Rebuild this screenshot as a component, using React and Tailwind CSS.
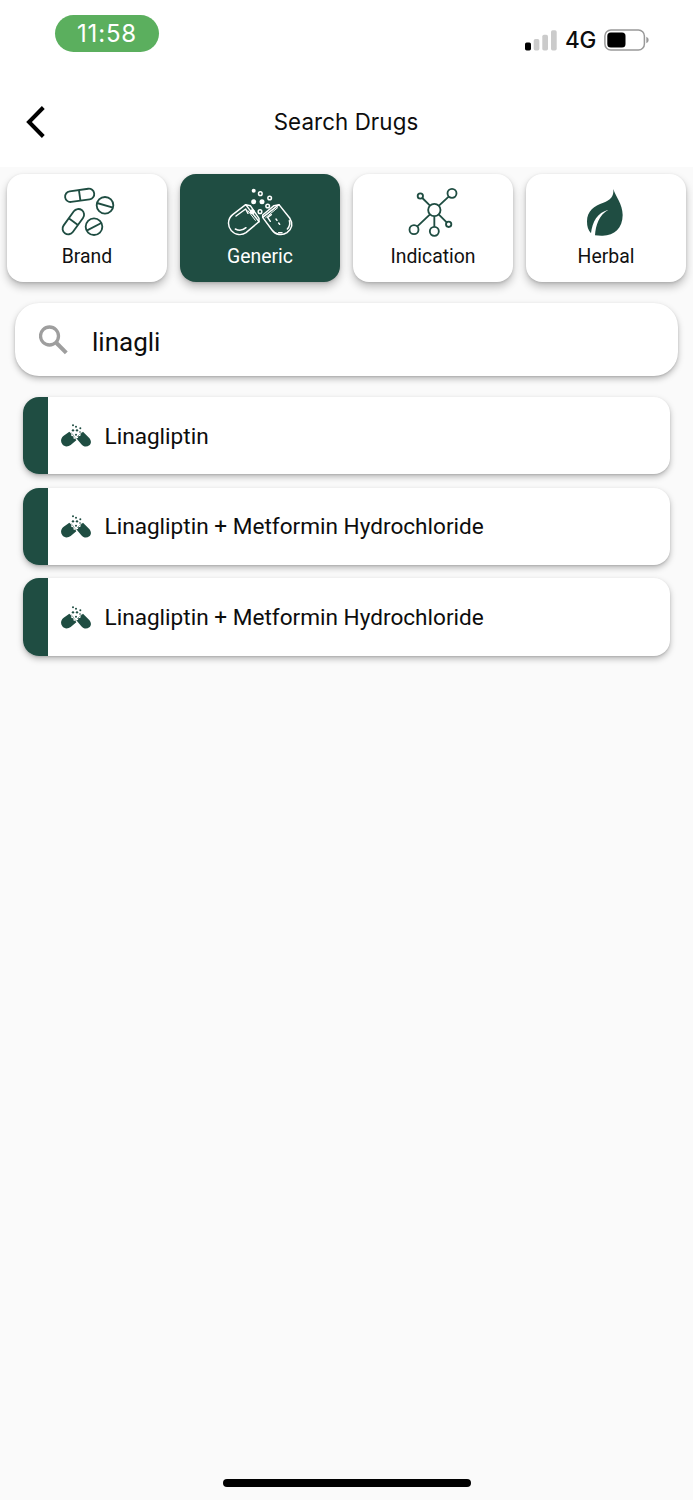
const TABS = [
  { label: "Brand", Icon: PillsIcon },
  { label: "Generic", Icon: OpenCapsuleIcon, active: true },
  { label: "Indication", Icon: MoleculeIcon },
  { label: "Herbal", Icon: LeafIcon },
];

const RESULTS = [
  "Linagliptin",
  "Linagliptin + Metformin Hydrochloride",
  "Linagliptin + Metformin Hydrochloride",
];

function PillsIcon() {
  return (
    <svg viewBox="1 1 192 156" className="w-16 h-[52px] overflow-visible" fill="none" stroke="#1f4d42" strokeWidth="5.5">
      <g transform="translate(75 29) rotate(-8)">
        <rect x="-44" y="-16" width="88" height="32" rx="16" />
        <path d="M0 -16V16" />
      </g>
      <g transform="translate(56 108) rotate(-54)">
        <rect x="-43" y="-17" width="86" height="34" rx="17" />
        <path d="M0 -17V17" />
      </g>
      <circle cx="151" cy="59" r="25" />
      <path d="M127 52L175 66" />
      <circle cx="118" cy="123" r="25" />
      <path d="M96 135L140 112" />
    </svg>
  );
}

function OpenCapsuleIcon() {
  return (
    <svg viewBox="0 1 192 156" className="w-16 h-[52px] overflow-visible" fill="none" stroke="#fff" strokeWidth="4.4" strokeLinecap="round" strokeLinejoin="round">
      {/* left half */}
      <path d="M53 57L14 87C-3 101 -1 123 10 135C21 149 42 150 54 141L93 108Z" />
      <path d="M53 57L67 60L93 98V108" />
      <path d="M24 91L53 70L60 83" />
      <path d="M60 75L82 104" strokeWidth="3" />
      <path d="M22 130C33 136 45 134 54 126" />
      {/* right half */}
      <path d="M153 57L104 95L132 133C142 148 163 151 177 141C193 129 195 113 185 97Z" />
      <path d="M153 57L138 60L104 88V95" />
      <path d="M149 66L113 96" strokeWidth="3" />
      <path d="M130 87L119 95L127 107" />
      <path d="M144 100L147 104M152 112L155 116" />
      <path d="M184 105C187 116 183 125 178 130M152 141H162" />
      {/* granules */}
      <g fill="#fff" stroke="none">
        <circle cx="77" cy="15" r="6" />
        <circle cx="77" cy="48" r="7.5" />
        <circle cx="102" cy="48" r="7.5" />
        <circle cx="73" cy="78" r="7.5" />
      </g>
      <circle cx="97" cy="24" r="5.5" />
      <circle cx="125" cy="37" r="5.5" />
      <circle cx="119" cy="61" r="5.5" />
      <circle cx="96" cy="78" r="5.5" />
    </svg>
  );
}

function MoleculeIcon() {
  return (
    <svg viewBox="0 1 192 156" className="w-16 h-[52px] overflow-visible" fill="none" stroke="#1f4d42" strokeWidth="5.5">
      <circle cx="100" cy="73" r="18.5" />
      <circle cx="153" cy="23" r="13.5" />
      <circle cx="58" cy="31" r="8" />
      <circle cx="39" cy="132" r="13.5" />
      <circle cx="100" cy="137" r="13.5" />
      <circle cx="143" cy="116" r="8" />
      <path d="M114 60L143 33M64 37L87 60M49 122L87 86M100 92V123M113 86L137 110" />
    </svg>
  );
}

function LeafIcon() {
  return (
    <svg viewBox="0 1 192 156" className="w-16 h-[52px] overflow-visible" fill="#1f4d42">
      <path d="M118 10C124 31 146 55 146 88C146 128 119 152 82 150C75 150 69 150 63 149C65 118 75 88 103 72C70 81 55 108 51 143C42 134 39 123 39 107C39 76 61 60 88 51C109 44 120 33 118 10Z" />
    </svg>
  );
}

function CapsuleIcon() {
  return (
    <svg viewBox="0 0 90 69" className="w-[30px] h-[23px] shrink-0" fill="#1f4d42">
      <path d="M25 23L7 36C-1 43 -2 53 4 61C10 69 21 69 29 63L46 49L43 44L38 44L37 37L31 36L31 29Z" />
      <path d="M66 23L84 41C92 50 91 58 85 64C77 70 68 69 61 61L46 43L51 42L52 36L58 36L59 29Z" />
      <path d="M31 26L45 44M61 26L48 39" stroke="#1f4d42" strokeWidth="2" strokeDasharray="3 2" />
      <circle cx="36" cy="4" r="3" />
      <circle cx="45" cy="8" r="3" />
      <circle cx="58" cy="13" r="3" />
      <circle cx="36" cy="19" r="3.5" />
      <circle cx="48" cy="19" r="3.5" />
      <circle cx="57" cy="24" r="2.5" />
      <circle cx="45" cy="32" r="3" />
    </svg>
  );
}

function StatusBar() {
  return (
    <div className="flex justify-between items-start h-[76px] pl-[55px] pr-11 pt-[15px]">
      <div className="w-[104px] h-[37px] rounded-full bg-[#5baf5e] text-white text-[24px] leading-[38px] text-center tracking-[0.8px] font-['Inter',sans-serif]">
        11:58
      </div>
      <div className="flex items-center pt-[11px]">
        <svg viewBox="0 0 32 21" className="w-8 h-[21px]" fill="#cbcbcb">
          <rect x="0" y="12.5" width="6" height="8" rx="1.7" fill="#000" />
          <rect x="8.7" y="9" width="5.7" height="11.5" rx="1.7" />
          <rect x="17.3" y="4.7" width="5.7" height="15.8" rx="1.7" />
          <rect x="26" y="0.3" width="5.7" height="20.2" rx="1.7" />
        </svg>
        <span className="ml-2 w-[31px] text-[22.5px] leading-7 font-medium tracking-[-0.3px] whitespace-nowrap font-['Inter',sans-serif]">4G</span>
        <svg viewBox="0 0 45 22" className="w-[45px] h-[22px] ml-2">
          <rect x="0.9" y="1" width="39.5" height="20" rx="6" fill="none" stroke="#999" strokeWidth="1.5" />
          <rect x="3.3" y="3.5" width="18.2" height="15" rx="3.5" />
          <path d="M42.3 7.7Q44.7 8.8 44.7 11T42.3 14.3Z" fill="#999" />
        </svg>
      </div>
    </div>
  );
}

function TabCard({ label, Icon, active }) {
  return (
    <button
      className={`flex flex-col items-center h-[108px] pt-3 rounded-2xl shadow-[0_5px_9px_rgba(0,0,0,0.24),0_1px_3px_rgba(0,0,0,0.14)] ${
        active ? "bg-[#1f4d42] text-white" : "bg-white text-[#111]"
      }`}
    >
      <Icon />
      <span className="mt-[7px] text-[19.4px] leading-6">{label}</span>
    </button>
  );
}

function ResultRow({ name }) {
  return (
    <li className="flex items-center h-[77.5px] rounded-2xl bg-white shadow-[0_3px_6px_rgba(0,0,0,0.26),0_1px_2px_rgba(0,0,0,0.12)]">
      <div className="w-[25px] h-full rounded-l-2xl bg-[#1f4d42] mr-[12.5px]" />
      <CapsuleIcon />
      <span className="ml-3.5 mt-[2px] text-[22.6px] leading-7">{name}</span>
    </li>
  );
}

export default function App() {
  return (
    <div className="w-[693px] h-[1500px] flex flex-col overflow-hidden bg-[#fafafa] text-[#0d0d0d] font-['Roboto',sans-serif]">
      <header className="h-[167px] bg-white shrink-0">
        <StatusBar />
        <div className="grid grid-cols-[60px_1fr_60px] items-center h-[91px]">
          <svg viewBox="0 0 20 32" className="w-5 h-8 ml-[26px]" fill="none" stroke="#000" strokeWidth="4">
            <path d="M17.3 1.5L3 16L17.3 30.5" />
          </svg>
          <h1 className="text-center text-[22.3px] leading-7 tracking-[0.1px] -ml-px font-['Inter',sans-serif]">Search Drugs</h1>
        </div>
      </header>

      <nav className="grid grid-cols-4 gap-[13px] px-[7px] pt-[6.6px]">
        {TABS.map((tab) => (
          <TabCard key={tab.label} {...tab} />
        ))}
      </nav>

      <div className="mt-[21.9px] mx-[15px] h-[72.5px] shrink-0 flex items-center rounded-[24px] bg-white shadow-[0_3px_6px_rgba(0,0,0,0.26),0_1px_2px_rgba(0,0,0,0.12)]">
        <svg viewBox="0 0 30 30" className="w-[30px] h-[30px] ml-6" fill="none" stroke="#9e9e9e" strokeWidth="3.3">
          <circle cx="10.5" cy="11" r="9" />
          <path d="M17.5 18L27.3 27.8" strokeWidth="4" />
        </svg>
        <span className="ml-[23px] mt-[5px] text-[26px] leading-8">linagli</span>
      </div>

      <ul className="flex flex-col gap-[13.2px] px-[23px] mt-[21px]">
        {RESULTS.map((name, i) => (
          <ResultRow key={i} name={name} />
        ))}
      </ul>

      <div className="mt-auto mb-[13px] mx-auto w-[248px] h-2 rounded-full bg-black shrink-0" />
    </div>
  );
}
